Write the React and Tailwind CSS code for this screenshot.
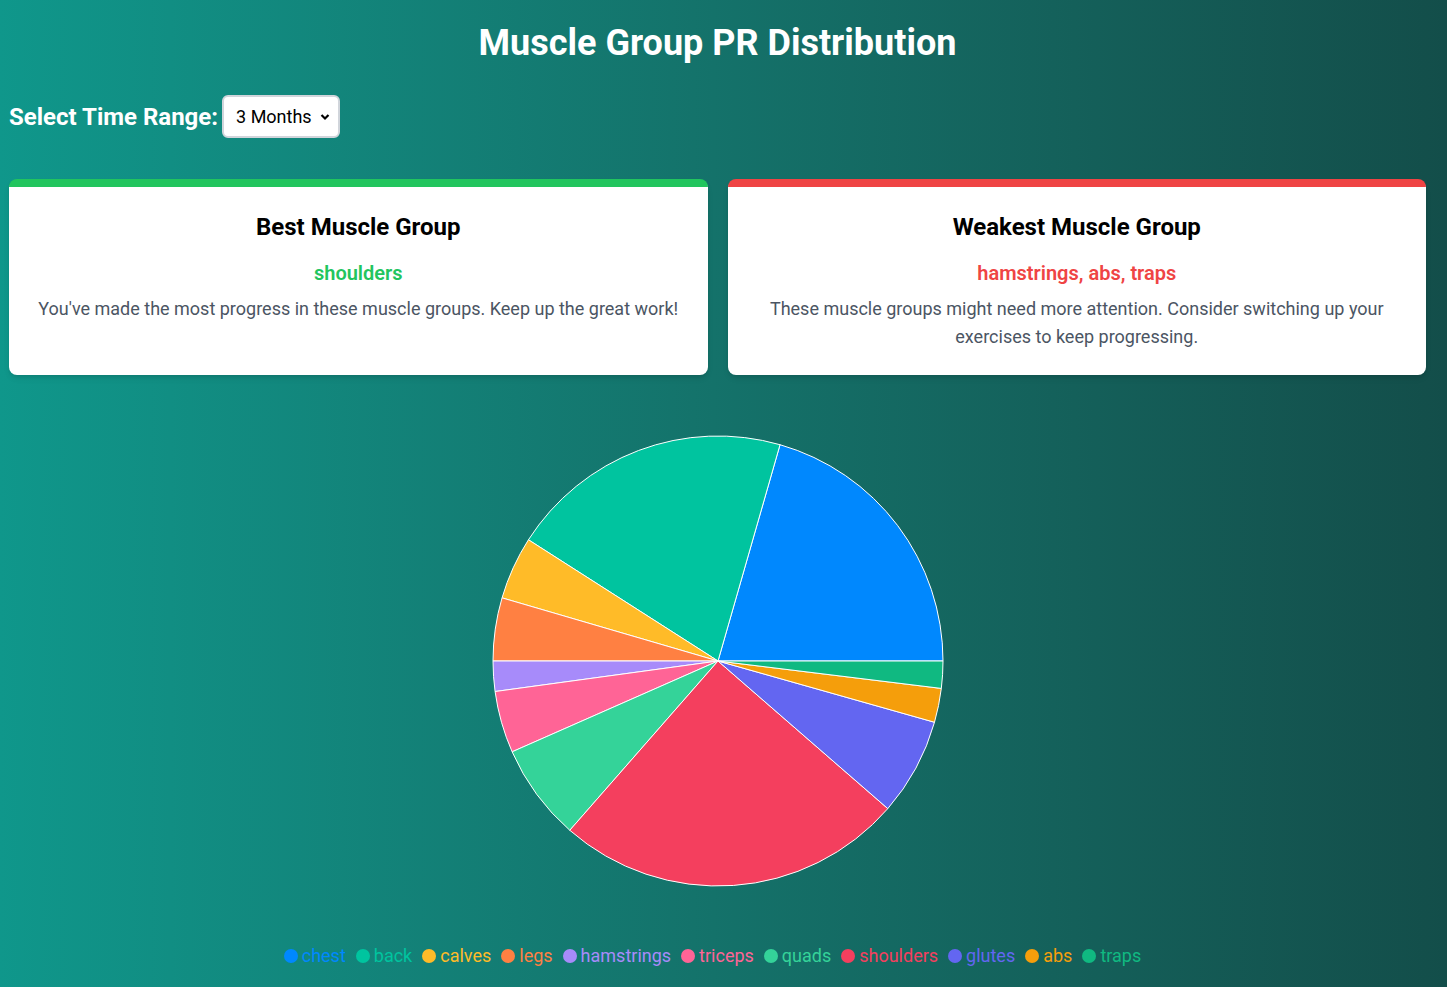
import React from "react";

const data = [
  { name: "chest", deg: 74, color: "#0088FE" },
  { name: "back", deg: 73.4, color: "#00C49F" },
  { name: "calves", deg: 16.3, color: "#FFBB28" },
  { name: "legs", deg: 16.3, color: "#FF8042" },
  { name: "hamstrings", deg: 7.8, color: "#A78BFA" },
  { name: "triceps", deg: 16, color: "#FF6496" },
  { name: "quads", deg: 25, color: "#34D399" },
  { name: "shoulders", deg: 90.2, color: "#F43F5E" },
  { name: "glutes", deg: 25.2, color: "#6366F1" },
  { name: "abs", deg: 8.8, color: "#F59E0B" },
  { name: "traps", deg: 7, color: "#10B981" },
];

function Pie() {
  const cx = 226, cy = 226, r = 225;
  const total = data.reduce((s, d) => s + d.deg, 0);
  let a = 0;
  const pt = (deg) => {
    const rad = (deg * Math.PI) / 180;
    return [cx + r * Math.cos(rad), cy - r * Math.sin(rad)];
  };
  return (
    <svg width="452" height="452" viewBox="0 0 452 452">
      {data.map((d) => {
        const span = (d.deg / total) * 360;
        const s = a, e = a + span;
        a = e;
        const [x1, y1] = pt(s);
        const [x2, y2] = pt(e);
        const large = span > 180 ? 1 : 0;
        return (
          <path
            key={d.name}
            d={`M${cx},${cy} L${x1},${y1} A${r},${r} 0 ${large} 0 ${x2},${y2} Z`}
            fill={d.color}
            stroke="#fff"
            strokeWidth="1"
          />
        );
      })}
    </svg>
  );
}

export default function App() {
  return (
    <div
      className="min-h-[987px] w-full bg-linear-to-r from-[#0f978b] to-[#134e4a] pl-[9px] pr-[21px]"
      style={{ fontFamily: "Roboto, 'Liberation Sans', sans-serif" }}
    >
      <h1 className="pt-[21px] text-center text-[36px] font-bold leading-[44px] text-white">
        Muscle Group PR Distribution
      </h1>
      <div className="mt-[30px] flex items-center gap-[4px]">
        <span className="text-[24px] font-bold text-white">Select Time Range:</span>
        <div className="flex h-[43px] w-[118px] items-center justify-between rounded-[6px] border-2 border-[#d1d5db] bg-white pl-[12px] pr-[8px] text-[18px] text-black">
          <span>3 Months</span>
          <svg width="10" height="8" viewBox="0 0 10 8">
            <path d="M1.5 2 L5 5.5 L8.5 2" fill="none" stroke="#000" strokeWidth="2.2" />
          </svg>
        </div>
      </div>
      <div className="mt-[41px] grid grid-cols-2 gap-[20px]">
        <div className="h-[196px] overflow-hidden rounded-[8px] border-t-[8px] border-[#22c55e] bg-white px-[20px] text-center shadow-md">
          <h2 className="mt-[25px] text-[24px] font-bold leading-[30px] text-black">Best Muscle Group</h2>
          <p className="mt-[19px] text-[20px] font-semibold leading-[24px] text-[#22c55e]">shoulders</p>
          <p className="mt-[10px] text-[18px] leading-[28px] text-[#4b5563]">
            You've made the most progress in these muscle groups. Keep up the great work!
          </p>
        </div>
        <div className="h-[196px] overflow-hidden rounded-[8px] border-t-[8px] border-[#ef4444] bg-white px-[36px] text-center shadow-md">
          <h2 className="mt-[25px] text-[24px] font-bold leading-[30px] text-black">Weakest Muscle Group</h2>
          <p className="mt-[19px] text-[20px] font-semibold leading-[24px] text-[#ef4444]">hamstrings, abs, traps</p>
          <p className="mt-[10px] text-[18px] leading-[28px] text-[#4b5563]">
            These muscle groups might need more attention. Consider switching up your exercises to keep progressing.
          </p>
        </div>
      </div>
      <div className="mt-[60px] flex justify-center">
        <Pie />
      </div>
      <div className="mt-[57px] flex flex-wrap items-center justify-center gap-x-[10px] pb-[20px] pr-[10px]">
        {data.map((d) => (
          <div key={d.name} className="flex items-center gap-[4px]">
            <span className="inline-block h-[14px] w-[14px] rounded-full" style={{ backgroundColor: d.color }} />
            <span className="text-[18px] leading-[24px]" style={{ color: d.color }}>
              {d.name}
            </span>
          </div>
        ))}
      </div>
    </div>
  );
}
